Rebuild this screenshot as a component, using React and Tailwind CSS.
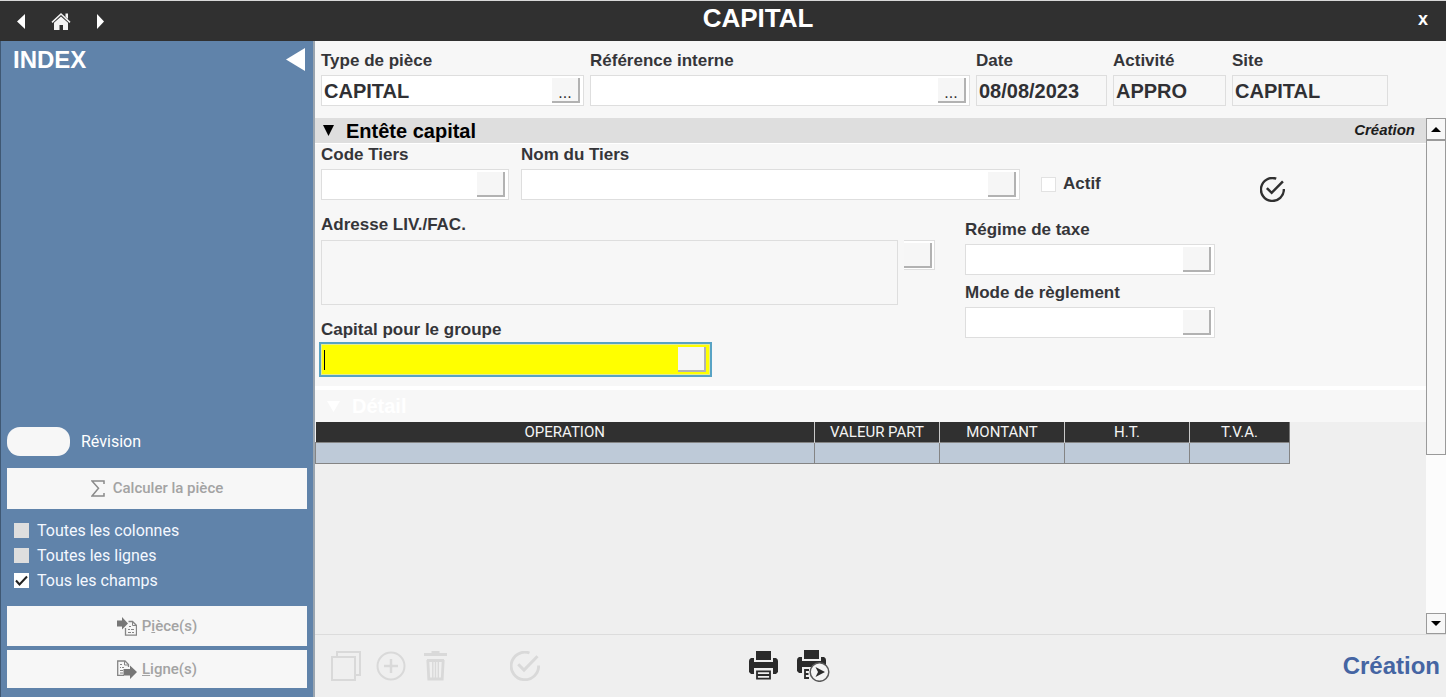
import React, { useState } from 'react';

const CheckCircle = ({ className }) => (
  <svg viewBox="0 0 24 24" className={className} fill="none" stroke="currentColor">
    <path d="M15.6 1.6A11 11 0 1 0 22.9 11.6" strokeWidth="2.3" />
    <path d="M6.6 10.6l4.6 4.6L22 4.2" strokeWidth="2.4" />
  </svg>
);

const Printer = () => (
  <>
    <path d="M8 0h15v9H8z" fill="currentColor" />
    <path d="M3 7h3v4h19V7h3q2 1 2 3v11l-2 2h-3v-6H6v6H3l-2-2V10q0-2 2-3z" fill="currentColor" />
  </>
);

const Picker = ({ label, dots }) => (
  <button
    type="button"
    aria-label={label}
    className="flex h-[25px] w-7 shrink-0 items-end justify-center border-r-2 border-b-2 border-[#b2b2b2] bg-[#f6f6f6] text-base leading-4 text-[#303030]"
  >
    {dots ? '...' : ''}
  </button>
);

const labelClass = 'block text-[17px] leading-5 font-bold whitespace-nowrap text-[#353539]';

const Field = ({ id, label, value, className, picker, dots, readOnly, active }) => {
  let box = 'border border-[#dedede] bg-white';
  if (readOnly) box = 'border border-[#dedede] bg-[#f7f7f7]';
  if (active) box = 'border border-[#e6ec8e] bg-[#ffff00] outline-2 outline-[#58a3c4]';

  return (
    <div className={className}>
      <label htmlFor={id} className={labelClass}>{label}</label>
      <div className={`mt-1 flex h-[31px] items-center pr-[3px] ${box}`}>
        {active && <span className="ml-0.5 h-5 w-px bg-black"></span>}
        <input
          id={id}
          type="text"
          defaultValue={value}
          readOnly={readOnly}
          className="h-7 min-w-0 flex-1 bg-transparent pl-0.5 text-xl leading-7 font-bold text-[#303034] outline-none"
        />
        {picker && <Picker label={`Choisir ${label}`} dots={dots} />}
      </div>
    </div>
  );
};

const SideCheck = ({ label, checked, onChange }) => (
  <label className="flex h-[25px] items-center gap-2">
    <span className="relative flex">
      <input
        type="checkbox"
        checked={checked}
        onChange={onChange}
        className="h-[15px] w-[15px] appearance-none bg-[#dedede] checked:bg-white"
      />
      {checked && (
        <svg viewBox="0 0 15 15" className="pointer-events-none absolute inset-0" fill="none" stroke="#222" strokeWidth="2">
          <path d="M2 7.5l3.5 4L13 3.5" />
        </svg>
      )}
    </span>
    {label}
  </label>
);

const sideButton = 'flex items-center justify-center gap-2 bg-[#f7f7f7] text-[15px] font-medium text-[#a3a3a3]';

const Sidebar = () => {
  const [options, setOptions] = useState({ colonnes: false, lignes: false, champs: true });
  const toggle = (key) => setOptions({ ...options, [key]: !options[key] });

  return (
    <aside className="flex w-[315px] shrink-0 flex-col border-r-2 border-l border-r-[#9aa5b0] border-l-[#3f5873] bg-[#6083aa] pr-1.5 pb-[9px] pl-1.5 font-['Roboto',sans-serif] text-base text-white">
      <div className="flex items-start justify-between pt-[5px] pl-1.5">
        <h2 className="font-['Liberation_Sans',sans-serif] text-2xl leading-7 font-bold">INDEX</h2>
        <button type="button" aria-label="Replier l'index" className="mt-0.5 mr-0.5">
          <svg width="19" height="23" viewBox="0 0 19 23" fill="white"><path d="M0 11.5L19 0v23z" /></svg>
        </button>
      </div>

      <div className="mt-auto flex items-center gap-[11px]">
        <button type="button" id="revision" role="switch" aria-checked="false" className="h-[29px] w-[63px] rounded-[13px] bg-[#f7f7f7]"></button>
        <label htmlFor="revision">Révision</label>
      </div>

      <button type="button" className={`mt-3 h-[41px] ${sideButton}`}>
        <svg width="14" height="17" viewBox="0 0 14 17" fill="none" stroke="#8b8b8b">
          <path d="M13 4V1H1l6.5 7.2L1 16h12v-3" strokeWidth="1.5" />
        </svg>
        Calculer la pièce
      </button>

      <div className="mt-[9px] ml-[7px] text-[#f4f8ff]">
        <SideCheck label="Toutes les colonnes" checked={options.colonnes} onChange={() => toggle('colonnes')} />
        <SideCheck label="Toutes les lignes" checked={options.lignes} onChange={() => toggle('lignes')} />
        <SideCheck label="Tous les champs" checked={options.champs} onChange={() => toggle('champs')} />
      </div>

      <button type="button" className={`mt-[13px] h-10 ${sideButton} gap-[5px]`}>
        <svg width="20" height="19" viewBox="0 0 20 19" fill="none" stroke="#858585">
          <path d="M8.5 11v7.2h11V8.5l-4-4h-4" strokeWidth="1.3" />
          <path d="M15.5 4.5v4h4" />
          <path d="M11 12.5h2m1 0h3M11 15.5h3m1 0h2M12 9.5h2" />
          <path d="M0 3.5h5V0l6 6.5-6 6v-3H0z" fill="#777" stroke="none" />
        </svg>
        <span>P<u>i</u>èce(s)</span>
      </button>
      <button type="button" className={`mt-1 h-[38px] ${sideButton} gap-[5px]`}>
        <svg width="20" height="19" viewBox="0 0 20 19" fill="none" stroke="#858585">
          <path d="M7 15.3H.7V1H8l3.5 3.5V7" strokeWidth="1.3" />
          <path d="M7.5 1v4h4" />
          <path d="M3 4.5h2M3 7.5h1m1 0h2M3 10.5h3M3 13h3" />
          <path d="M6.5 9h6.5V5.5l7 6.5-7 7v-3.5H6.5z" fill="#777" stroke="none" />
        </svg>
        <span><u>L</u>igne(s)</span>
      </button>
    </aside>
  );
};

const TopBar = () => (
  <header className="flex h-[41px] shrink-0 items-center border-t border-[#d8d8d8] bg-[#303030] px-4 text-white">
    <nav className="flex flex-1 items-center">
      <button type="button" aria-label="Précédent" className="flex w-[35px]">
        <svg width="10" height="15" viewBox="0 0 10 15" fill="white"><path d="M1 7.5L9 0v15z" /></svg>
      </button>
      <button type="button" aria-label="Accueil" className="flex w-[44px]">
        <svg width="20" height="19" viewBox="0 0 20 19" fill="#f4f4f4">
          <path d="M14.5 1.5H17V7l-2.5-2.3z" />
          <path d="M1 10.4L10 2l9 8.4" fill="none" stroke="#f4f4f4" strokeWidth="1.5" />
          <path d="M3 10.8L10 4.5l7 6.3V18h-5v-5H8.5v5H3z" />
        </svg>
      </button>
      <button type="button" aria-label="Suivant" className="flex">
        <svg width="10" height="15" viewBox="0 0 10 15" fill="white"><path d="M9 7.5L2 0v15z" /></svg>
      </button>
    </nav>
    <h1 className="pb-1.5 pl-[72px] text-[26px] leading-8 font-bold">CAPITAL</h1>
    <div className="flex flex-1 justify-end pr-0.5">
      <button type="button" aria-label="Fermer" className="pb-1 text-lg leading-5 font-bold">x</button>
    </div>
  </header>
);

const columns = [
  { label: 'OPERATION', width: '' },
  { label: 'VALEUR PART', width: 'w-[125px]' },
  { label: 'MONTANT', width: 'w-[125px]' },
  { label: 'H.T.', width: 'w-[125px]' },
  { label: 'T.V.A.', width: 'w-[100px]' }
];

const App = () => {
  return (
    <div className="flex min-h-screen flex-col bg-[#efefef] font-['Liberation_Sans',sans-serif]">
      <TopBar />
      <div className="flex flex-1">
        <Sidebar />

        <main className="flex min-w-0 flex-1 flex-col">
          {/* Document fields */}
          <div className="flex gap-1.5 bg-[#f7f7f7] pt-2.5 pr-[58px] pb-3 pl-1.5">
            <Field id="type" label="Type de pièce" value="CAPITAL" className="w-[263px]" picker dots />
            <Field id="reference" label="Référence interne" className="min-w-0 flex-1" picker dots />
            <Field id="date" label="Date" value="08/08/2023" className="w-[131px]" readOnly />
            <Field id="activite" label="Activité" value="APPRO" className="w-[113px]" readOnly />
            <Field id="site" label="Site" value="CAPITAL" className="w-[156px]" readOnly />
          </div>

          <div className="flex flex-1">
            <div className="flex min-w-0 flex-1 flex-col">
              <div className="flex h-[26px] items-center border-b border-white bg-[#dedede] pr-[11px] pl-2">
                <button type="button" className="flex items-center gap-3 text-xl leading-6 font-bold text-black">
                  <svg width="11" height="11" viewBox="0 0 11 11"><path d="M0 0h11L5.5 11z" /></svg>
                  Entête capital
                </button>
                <span className="ml-auto text-[15px] font-bold text-[#1c1c1c] italic">Création</span>
              </div>

              {/* Third party */}
              <section className="bg-[#f7f7f7] pt-px pb-[11px] pl-1.5">
                <div className="flex items-end">
                  <Field id="code" label="Code Tiers" className="mr-3 w-[188px]" picker />
                  <Field id="nom" label="Nom du Tiers" className="min-w-0 flex-1" picker />
                  <label className="mb-1.5 ml-[21px] flex w-[219px] items-center gap-[7px] text-[17px] leading-5 font-bold text-[#353539]">
                    <input type="checkbox" className="h-[15px] w-[15px] appearance-none border border-[#e2e2e2] bg-white checked:bg-[#353539]" />
                    Actif
                  </label>
                  <button type="button" aria-label="Valider" className="-mb-0.5 mr-[141px] text-[#303030]">
                    <CheckCircle className="h-[25px] w-[25px]" />
                  </button>
                </div>

                <div className="mt-[15px] flex">
                  <div className="min-w-0 flex-1">
                    <div className="flex gap-1.5">
                      <div className="min-w-0 flex-1">
                        <label htmlFor="adresse" className={labelClass}>Adresse LIV./FAC.</label>
                        <textarea id="adresse" className="mt-[5px] block h-[65px] w-full resize-none border border-[#dedede] bg-[#f7f7f7] outline-none" readOnly></textarea>
                      </div>
                      <div className="mt-[25px] flex h-[30px] items-center border-y border-r border-[#dedede] bg-white pr-0.5">
                        <Picker label="Choisir une adresse" />
                      </div>
                    </div>
                    <Field id="capital" label="Capital pour le groupe" className="mt-[15px] w-[389px]" picker active />
                  </div>
                  <div className="mr-[211px] ml-[30px] w-[250px] pt-[5px]">
                    <Field id="taxe" label="Régime de taxe" picker />
                    <Field id="reglement" label="Mode de règlement" className="mt-2" picker />
                  </div>
                </div>
              </section>

              {/* Detail lines */}
              <div className="h-9 border-t-4 border-white bg-[#f7f7f7] pl-3">
                <button type="button" className="flex h-8 items-center gap-3 text-xl font-bold text-white">
                  <svg width="13" height="11" viewBox="0 0 13 11" fill="white"><path d="M0 0h13L6.5 11z" /></svg>
                  Détail
                </button>
              </div>
              <div className="pr-[136px]">
                <table className="w-full table-fixed border-collapse">
                  <thead>
                    <tr className="bg-[#303030] font-['Roboto',sans-serif] text-[15px] leading-5 text-[#f4f4f4]">
                      {columns.map((col) => (
                        <th key={col.label} className={`h-[19px] border-r border-[#c8c8c8] p-0 font-normal last:border-[#777] ${col.width}`}>
                          {col.label}
                        </th>
                      ))}
                    </tr>
                  </thead>
                  <tbody>
                    <tr className="bg-[#becad8]">
                      {columns.map((col) => (
                        <td key={col.label} className="h-[21px] border border-[#848484] p-0"></td>
                      ))}
                    </tr>
                  </tbody>
                </table>
              </div>
            </div>

            {/* Scroll bar */}
            <div className="flex w-5 shrink-0 flex-col bg-[#fcfcfc]">
              <button type="button" aria-label="Défiler vers le haut" className="flex h-[22px] shrink-0 items-center justify-center border border-[#9a9a9a] bg-[#f7f7f7]">
                <svg width="10" height="5" viewBox="0 0 10 5"><path d="M0 5L5 0l5 5z" /></svg>
              </button>
              <div className="flex-1">
                <div className="h-2/3 border border-[#9a9a9a] bg-[#f7f7f7]"></div>
              </div>
              <button type="button" aria-label="Défiler vers le bas" className="flex h-[21px] shrink-0 items-center justify-center border border-[#9a9a9a] bg-[#f7f7f7]">
                <svg width="10" height="5" viewBox="0 0 10 5"><path d="M0 0h10L5 5z" /></svg>
              </button>
            </div>
          </div>

          {/* Actions */}
          <footer className="flex h-[63px] shrink-0 items-center border-t border-[#dcdcdc] pr-1.5 pl-4">
            <div className="flex w-[417px] items-center text-[#d9d9d9]">
              <button type="button" aria-label="Dupliquer">
                <svg width="30" height="30" viewBox="0 0 30 30" fill="none" stroke="currentColor" strokeWidth="2">
                  <path d="M1 6h23v23H1z" />
                  <path d="M6 5V1h23v23h-4" />
                </svg>
              </button>
              <button type="button" aria-label="Ajouter" className="ml-[15px]">
                <svg width="30" height="30" viewBox="0 0 30 30" fill="none" stroke="currentColor" strokeWidth="2">
                  <circle cx="15" cy="15" r="13.5" />
                  <path d="M15 8v14M8 15h14" strokeWidth="2.5" />
                </svg>
              </button>
              <button type="button" aria-label="Supprimer" className="ml-[18px]">
                <svg width="23" height="30" viewBox="0 0 23 30" fill="none" stroke="currentColor">
                  <path d="M0 3.5h23M7.5 1.2h8" strokeWidth="2.8" />
                  <path d="M3 9.5h17M3.8 9l1 19h13.4l1-19" strokeWidth="2.8" />
                  <path d="M8.8 10v17M11.5 10v17M14.3 10v17" strokeWidth="1.4" />
                </svg>
              </button>
              <button type="button" aria-label="Valider la pièce" className="ml-[63px]">
                <CheckCircle className="h-[30px] w-[30px]" />
              </button>
            </div>
            <div className="flex items-center gap-[17px] text-[#2b2b2b]">
              <button type="button" aria-label="Imprimer">
                <svg width="31" height="30" viewBox="0 0 31 30">
                  <Printer />
                  <path d="M7.5 9.5h16" stroke="#efefef" />
                  <path d="M9 20.3h13v7.4H9zM9 24h13" fill="#efefef" stroke="currentColor" strokeWidth="1.8" />
                </svg>
              </button>
              <button type="button" aria-label="Imprimer l'état">
                <svg width="34" height="32" viewBox="0 0 34 32">
                  <Printer />
                  <path d="M7.5 9.5h16" stroke="#efefef" />
                  <path d="M7 17h17v11H7z" fill="#efefef" />
                  <path d="M13 20H9v8h4M9 24h3.5" fill="none" stroke="currentColor" strokeWidth="1.8" />
                  <circle cx="23.5" cy="22" r="9.3" fill="#f4f4f4" stroke="#5a5a5a" strokeWidth="1.5" />
                  <path d="M19.5 17l9.5 5-9.5 5 2.5-5z" fill="currentColor" />
                </svg>
              </button>
            </div>
            <div className="ml-auto text-2xl font-bold text-[#4565a3]">Création</div>
          </footer>
        </main>
      </div>
    </div>
  );
};

export default App;
